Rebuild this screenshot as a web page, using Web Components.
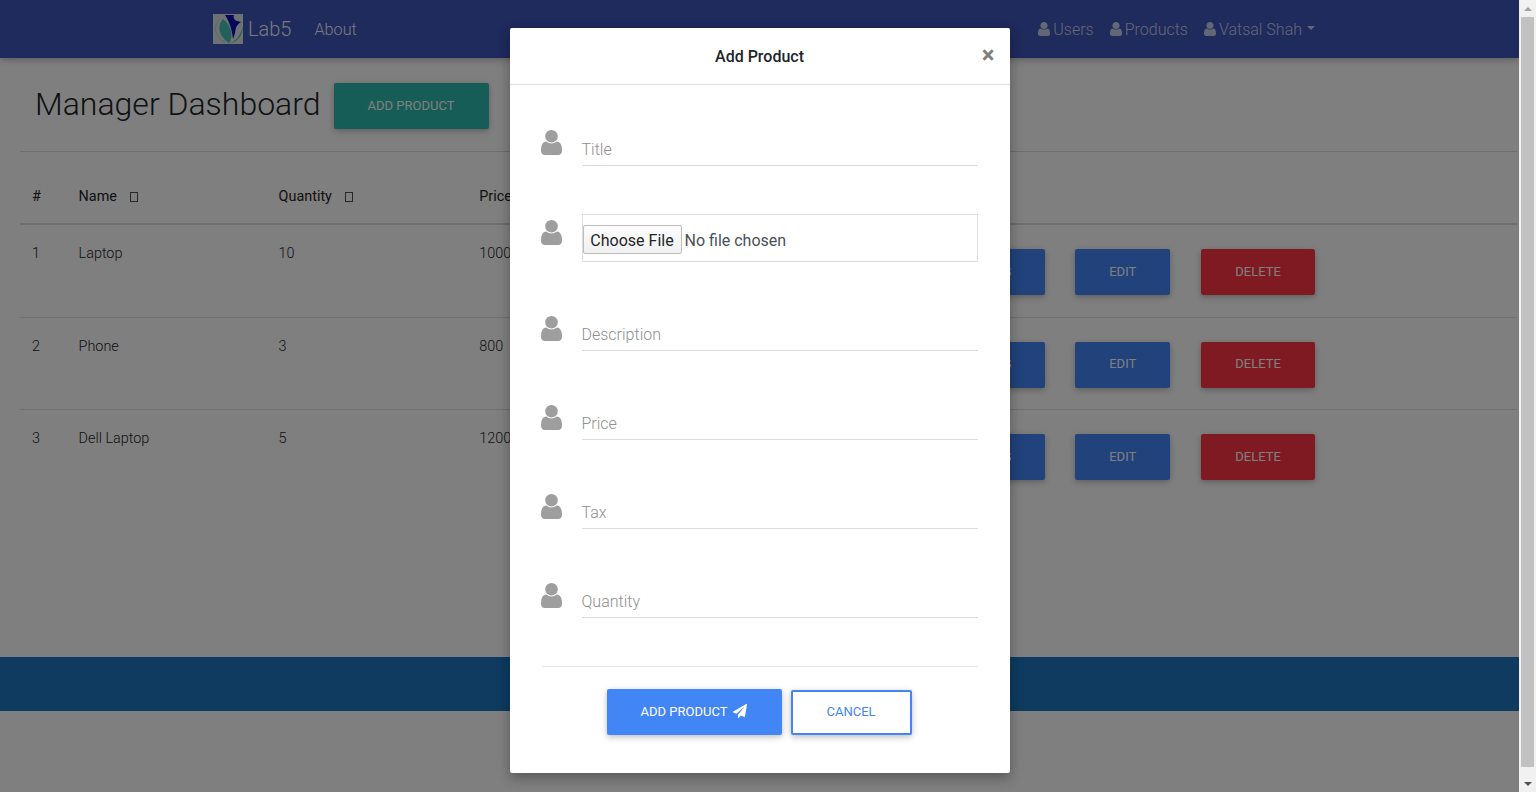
<!DOCTYPE html>
<html>
<head>
<meta charset="utf-8">
<title>Lab5</title>
<style>
html, body { margin: 0; height: 100%; overflow: hidden; }
body { display: flex; font-family: Roboto, "Liberation Sans", sans-serif; font-weight: 300; color: #212529; background: #fff; }
</style>
</head>
<body>
<app-page>
  <app-navbar></app-navbar>
  <page-heading title="Manager Dashboard"></page-heading>
  <product-table>
    <product-row index="1" name="Laptop" quantity="10" price="1000"></product-row>
    <product-row index="2" name="Phone" quantity="3" price="800"></product-row>
    <product-row index="3" name="Dell Laptop" quantity="5" price="1200"></product-row>
  </product-table>
  <app-footer></app-footer>
  <add-product-modal slot="overlay"></add-product-modal>
</app-page>
<fake-scrollbar></fake-scrollbar>

<script>
const USER_PATH = 'M1536 1399q0 109-62.5 187t-150.5 78h-854q-88 0-150.5-78t-62.5-187q0-85 8.5-160.5t31.5-152 58.5-131 94-89 134.5-34.5q131 128 313 128t313-128q76 0 134.5 34.5t94 89 58.5 131 31.5 152 8.5 160.5zm-256-887q0 159-112.5 271.5t-271.5 112.5-271.5-112.5-112.5-271.5 112.5-271.5 271.5-112.5 271.5 112.5 112.5 271.5z';
const PLANE_PATH = 'M1764 11q33 24 27 64l-256 1536q-5 29-32 45-14 8-31 8-11 0-24-5l-453-185-242 295q-18 23-49 23-13 0-22-4-19-7-30.5-23.5t-11.5-36.5v-349l864-1059-1069 925-395-162q-37-14-40-55-2-40 32-59l1664-960q15-9 32-9 20 0 36 11z';

function shadow(element, html) {
  const root = element.attachShadow({ mode: 'open' });
  root.innerHTML = html;
  return root;
}

class UserIcon extends HTMLElement {
  constructor() {
    super();
    shadow(this, `
<style>
:host { display: inline-flex; width: var(--icon-width, 12px); height: var(--icon-height, 14px); flex: none; }
svg { width: 100%; height: 100%; fill: currentColor; display: block; }
</style>
<svg viewBox="256 128 1280 1536" preserveAspectRatio="none"><path d="${USER_PATH}"/></svg>`);
  }
}
customElements.define('user-icon', UserIcon);

class MdButton extends HTMLElement {
  constructor() {
    super();
    shadow(this, `
<style>
:host {
  display: inline-flex;
  align-items: center;
  justify-content: center;
  box-sizing: border-box;
  height: 46px;
  padding: 0 34px 2px;
  border-radius: 2px;
  background: var(--btn-bg, #4285f4);
  color: var(--btn-color, #fff);
  font: 400 13px Roboto, sans-serif;
  text-transform: uppercase;
  white-space: nowrap;
  box-shadow: 0 2px 5px rgba(0,0,0,.16), 0 2px 10px rgba(0,0,0,.12);
  flex: none;
}
</style>
<slot></slot>`);
  }
}
customElements.define('md-button', MdButton);

class AppPage extends HTMLElement {
  constructor() {
    super();
    shadow(this, `
<style>
:host { display: flex; flex-direction: column; position: relative; width: 1519px; flex: none; height: 792px; overflow: hidden; }
</style>
<slot></slot>
<slot name="overlay"></slot>`);
  }
}
customElements.define('app-page', AppPage);

class AppNavbar extends HTMLElement {
  constructor() {
    super();
    shadow(this, `
<style>
:host {
  display: flex;
  align-items: center;
  box-sizing: border-box;
  height: 58px;
  padding: 0 204px 0 213px;
  background: #3f54bb;
  color: #fff;
  box-shadow: 0 2px 5px rgba(0,0,0,.16), 0 2px 10px rgba(0,0,0,.12);
  flex: none;
}
.brand { display: flex; align-items: center; gap: 5px; font-size: 20px; color: rgba(255,255,255,.95); }
.brand svg { display: block; width: 30px; height: 30px; }
.about { margin-left: 23px; font-size: 16.2px; font-weight: 300; color: rgba(255,255,255,.95); }
.right { margin-left: auto; display: flex; gap: 16px; color: rgba(255,255,255,.72); font-size: 16px; }
.link { display: flex; align-items: center; gap: 3px; }
.caret { width: 0; height: 0; margin: 0 0 3px 2px; border: 4.5px solid transparent; border-top-color: currentColor; border-bottom: 0; }
</style>
<div class="brand">
  <svg viewBox="0 0 30 30">
    <rect width="30" height="30" fill="#dfe4e4"/>
    <path d="M12 1 L21 1 C20 3 21 6 24 7 L28 8 C25 10 23 12 22.500 16 C22 20 21 22 20 25 C19 15 16 7 12 1Z" fill="#0a0ab4"/>
    <path d="M10 5 C4 11 5 22 16 29 C21 22 18 11 10 5Z" fill="#44c2b6"/>
    <path d="M7 5 C0 11 1 24 12 28" fill="none" stroke="#a5dcd7" stroke-width="1"/>
    <path d="M30 12 C28 20 24 26 18 29 C23 28.500 30 22 30 12Z" fill="#44c2b6"/>
  </svg>
  <span>Lab5</span>
</div>
<span class="about">About</span>
<div class="right">
  <span class="link"><user-icon></user-icon>Users</span>
  <span class="link"><user-icon></user-icon>Products</span>
  <span class="link"><user-icon></user-icon>Vatsal Shah<span class="caret"></span></span>
</div>`);
  }
}
customElements.define('app-navbar', AppNavbar);

class PageHeading extends HTMLElement {
  constructor() {
    super();
    const root = shadow(this, `
<style>
:host {
  display: flex;
  align-items: center;
  box-sizing: border-box;
  height: 94px;
  margin: 0 2px 0 20px;
  padding: 0 0 0 15px;
  border-bottom: 1px solid #dcdcdc;
  flex: none;
}
h1 { margin: 0 13px 2px 0; font: 300 32px Roboto, sans-serif; color: #212529; }
md-button { --btn-bg: #2bbbad; margin-top: 3px; width: 155px; padding: 0 0 2px; }
</style>
<h1></h1>
<md-button>Add Product</md-button>`);
    root.querySelector('h1').textContent = this.getAttribute('title');
  }
}
customElements.define('page-heading', PageHeading);

const TABLE_COLUMNS = '46.6px 200px 200.6px 200px 260px 1fr';

class ProductTable extends HTMLElement {
  constructor() {
    super();
    shadow(this, `
<style>
:host { display: block; margin: 0 2px 0 20px; flex: none; height: 505px; --table-columns: ${TABLE_COLUMNS}; }
.head {
  display: grid;
  grid-template-columns: var(--table-columns);
  height: 73px;
  box-sizing: border-box;
  padding-top: 34px;
  border-bottom: 2px solid #dcdcdc;
  font: 400 14.4px/21px Roboto, sans-serif;
  color: #212529;
}
.head span { padding-left: 12px; display: flex; align-items: center; height: 21px; }
.sort { display: inline-block; box-sizing: border-box; width: 8px; height: 10px; margin-left: 13px; border: 1px solid #4a4d50; }
</style>
<div class="head">
  <span>#</span>
  <span>Name<i class="sort"></i></span>
  <span>Quantity<i class="sort"></i></span>
  <span>Price</span>
</div>
<slot></slot>`);
  }
}
customElements.define('product-table', ProductTable);

class ProductRow extends HTMLElement {
  constructor() {
    super();
    const root = shadow(this, `
<style>
:host {
  display: grid;
  grid-template-columns: var(--table-columns);
  box-sizing: border-box;
  height: 92.6px;
  border-bottom: 1px solid #e2e2e2;
  font: 300 14.4px/21px Roboto, sans-serif;
  color: #212529;
}
:host(:last-child) { border-bottom: 0; }
span { padding: 18px 0 0 12px; }
.actions { display: flex; padding-top: 24px; align-items: flex-start; }
.edit { margin-left: 30px; }
.delete { margin-left: 31px; --btn-bg: #ff3547; }
</style>
<span class="index"></span>
<span class="name"></span>
<span class="quantity"></span>
<span class="price"></span>
<div></div>
<div class="actions">
  <md-button>Details</md-button>
  <md-button class="edit">Edit</md-button>
  <md-button class="delete">Delete</md-button>
</div>`);
    for (const key of ['index', 'name', 'quantity', 'price']) {
      root.querySelector('.' + key).textContent = this.getAttribute(key);
    }
  }
}
customElements.define('product-row', ProductRow);

class AppFooter extends HTMLElement {
  constructor() {
    super();
    shadow(this, `
<style>
:host { display: block; height: 54px; background: #1c76bf; flex: none; }
</style>`);
  }
}
customElements.define('app-footer', AppFooter);

class FormField extends HTMLElement {
  constructor() {
    super();
    shadow(this, `
<style>
:host { display: flex; margin-bottom: 48px; color: #9e9e9e; --icon-width: 21px; --icon-height: 25px; }
user-icon { margin: 6px 20px 0 31px; }
:host(:first-child) user-icon { margin-top: 5px; }
.control {
  flex: none;
  box-sizing: border-box;
  width: 396px;
  height: 41px;
  display: flex;
  align-items: flex-end;
  padding-bottom: 3px;
  border-bottom: 1px solid #ddd;
  font: 300 16px/24px Roboto, sans-serif;
  color: #8f8f8f;
}
</style>
<user-icon></user-icon>
<div class="control"><slot></slot></div>`);
  }
}
customElements.define('form-field', FormField);

class FileField extends HTMLElement {
  constructor() {
    super();
    shadow(this, `
<style>
:host { display: flex; margin-bottom: 48px; color: #9e9e9e; --icon-width: 21px; --icon-height: 25px; }
user-icon { margin: 6px 20px 0 31px; }
.control {
  flex: none;
  box-sizing: border-box;
  width: 396px;
  height: 48px;
  display: flex;
  align-items: center;
  padding: 2px 0 0 0;
  border: 1px solid #dedede;
  font: 400 16px Roboto, sans-serif;
  color: #495057;
}
.choose {
  box-sizing: border-box;
  width: 99px;
  height: 29px;
  margin-right: 3px;
  padding-top: 2px;
  display: flex;
  align-items: center;
  justify-content: center;
  background: linear-gradient(#fdfdfd, #f0f0f0);
  border: 1px solid #bdbdbd;
  border-radius: 2px;
  color: #212529;
}
.none { margin-top: 2px; }
</style>
<user-icon></user-icon>
<div class="control"><span class="choose">Choose File</span><span class="none">No file chosen</span></div>`);
  }
}
customElements.define('file-field', FileField);

class AddProductModal extends HTMLElement {
  constructor() {
    super();
    shadow(this, `
<style>
:host {
  position: absolute;
  inset: 0;
  display: flex;
  justify-content: center;
  align-items: flex-start;
  padding-top: 28px;
  box-sizing: border-box;
  background: rgba(0,0,0,.5);
}
.dialog {
  box-sizing: border-box;
  width: 500px;
  height: 745px;
  background: #fff;
  border-radius: 2px;
  box-shadow: 0 5px 11px rgba(0,0,0,.18), 0 4px 15px rgba(0,0,0,.15);
}
header {
  position: relative;
  box-sizing: border-box;
  height: 57px;
  display: flex;
  align-items: center;
  justify-content: center;
  border-bottom: 1px solid #dee2e6;
  font: 500 16px Roboto, sans-serif;
  color: #212529;
}
.close { position: absolute; right: 15px; top: 12px; font: 700 24px/30px Roboto, sans-serif; color: #7f7f7f; }
.body { padding-top: 40px; }
.rule { height: 1px; margin: 0 32px; background: #e6e6e6; }
.actions { display: flex; justify-content: center; align-items: flex-start; padding-top: 22px; padding-right: 1px; gap: 9px; }
.submit { display: inline-flex; gap: 6px; width: 175px; padding: 0 0 2px; }
.submit svg { width: 14px; height: 14px; fill: #fff; display: block; }
.cancel {
  --btn-bg: #fff;
  --btn-color: #4285f4;
  box-sizing: border-box;
  width: 121px;
  margin-top: 1px;
  height: 45px;
  padding: 0 0 3px;
  outline: none;
  border: 2px solid #4285f4;
}
</style>
<div class="dialog">
  <header>Add Product<span class="close">×</span></header>
  <div class="body">
    <form-field>Title</form-field>
    <file-field></file-field>
    <form-field>Description</form-field>
    <form-field>Price</form-field>
    <form-field>Tax</form-field>
    <form-field>Quantity</form-field>
  </div>
  <div class="rule"></div>
  <div class="actions">
    <md-button class="submit">Add Product<svg viewBox="0 0 1792 1792"><path d="${PLANE_PATH}"/></svg></md-button>
    <md-button class="cancel">Cancel</md-button>
  </div>
</div>`);
  }
}
customElements.define('add-product-modal', AddProductModal);

class FakeScrollbar extends HTMLElement {
  constructor() {
    super();
    shadow(this, `
<style>
:host { display: flex; flex-direction: column; flex: none; width: 17px; height: 792px; background: #f1f1f1; }
.arrow { height: 17px; display: flex; align-items: center; justify-content: center; flex: none; }
.up { width: 0; height: 0; border: 4px solid transparent; border-bottom: 4px solid #a3a3a3; border-top: 0; }
.down { width: 0; height: 0; border: 4px solid transparent; border-top: 4px solid #505050; border-bottom: 0; }
.thumb { flex: 1; margin: 0 2px 8px 2px; background: #c1c1c1; }
</style>
<div class="arrow"><i class="up"></i></div>
<div class="thumb"></div>
<div class="arrow"><i class="down"></i></div>`);
  }
}
customElements.define('fake-scrollbar', FakeScrollbar);
</script>
</body>
</html>
